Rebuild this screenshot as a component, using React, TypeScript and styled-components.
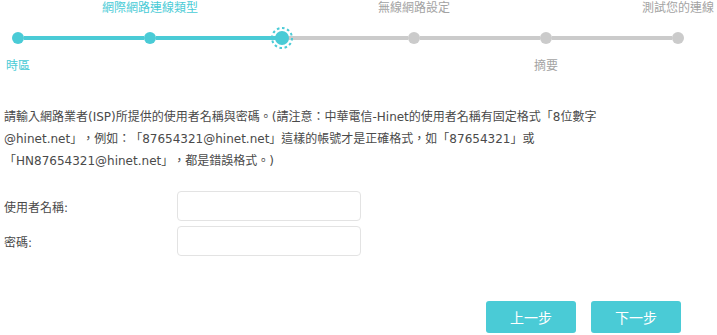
import * as React from 'react'
import styled, { createGlobalStyle } from 'styled-components'

const GlobalStyle = createGlobalStyle`
	html, body {
		margin: 0;
		padding: 0;
		background: #ffffff;
	}
	body {
		font-family: 'DejaVu Sans', 'Noto Sans CJK TC', sans-serif;
		font-size: 12px;
		color: #4a4a4a;
		text-spacing-trim: space-all;
	}
`

const TEAL = '#4acbd6'
const GREY = '#cbcbcb'

const Page = styled.div`
	width: 717px;
	height: 335px;
	overflow: hidden;
	box-sizing: border-box;
`

const Stepper = styled.div`
	display: flex;
	width: 684px;
	padding-left: 12px;
	box-sizing: border-box;
`

const Step = styled.div`
	width: 12px;
	display: flex;
	flex-direction: column;
	align-items: center;
	flex-shrink: 0;
`

const StepLabel = styled.div<{ $on: boolean }>`
	height: 16px;
	line-height: 16px;
	font-size: 12px;
	white-space: nowrap;
	color: ${p => (p.$on ? TEAL : '#a3a3a3')};
`

const DotBox = styled.div`
	position: relative;
	width: 12px;
	height: 22px;
	margin: 11px 0 9px;
	display: flex;
	align-items: center;
	justify-content: center;
`

const Dot = styled.div<{ $on: boolean; $current?: boolean }>`
	width: ${p => (p.$current ? 14 : 12)}px;
	height: ${p => (p.$current ? 14 : 12)}px;
	border-radius: 50%;
	flex-shrink: 0;
	background: ${p => (p.$on ? TEAL : GREY)};
`

const Ring = styled.svg`
	position: absolute;
	left: 50%;
	top: 50%;
	width: 22px;
	height: 22px;
	margin: -11px 0 0 -11px;
`

const Segment = styled.div<{ $on: boolean }>`
	flex: 1;
	height: 4px;
	margin-top: 36px;
	background: ${p => (p.$on ? TEAL : GREY)};
`

const Content = styled.div`
	padding: 32px 0 0 4px;
`

const Notice = styled.p`
	margin: 0;
	width: 640px;
	line-height: 22px;
	font-size: 12px;
	color: #4a4a4a;
`

const Form = styled.div`
	margin-top: 19px;
	display: flex;
	flex-direction: column;
	gap: 5px;
`

const Row = styled.div`
	display: flex;
	align-items: center;
`

const Label = styled.label`
	width: 173px;
	font-size: 12px;
	color: #4a4a4a;
`

const Input = styled.input`
	width: 184px;
	height: 30px;
	box-sizing: border-box;
	border: 1px solid #e3e3e3;
	border-radius: 4px;
	padding: 0 8px;
	font-family: inherit;
	font-size: 12px;
	outline: none;
`

const Actions = styled.div`
	display: flex;
	justify-content: flex-end;
	gap: 15px;
	margin-top: 45px;
	padding-right: 36px;
`

const Button = styled.button`
	width: 90px;
	height: 32px;
	border: none;
	border-radius: 3px;
	background: ${TEAL};
	color: #ffffff;
	font-family: inherit;
	font-size: 14px;
	cursor: pointer;
`

const steps = [
	{ label: '時區', below: true },
	{ label: '網際網路連線類型', below: false },
	{ label: '', below: false },
	{ label: '無線網路設定', below: false },
	{ label: '摘要', below: true },
	{ label: '測試您的連線', below: false },
]
const current = 2

export default function App() {
	return (
		<Page>
			<GlobalStyle />
			<Stepper>
				{steps.map((s, i) => (
					<React.Fragment key={i}>
						{i > 0 && <Segment $on={i <= current} />}
						<Step>
							<StepLabel $on={i <= current}>{s.below ? '' : s.label}</StepLabel>
							<DotBox>
								<Dot $on={i <= current} $current={i === current} />
								{i === current && (
									<Ring viewBox="0 0 22 22">
										<circle
											cx="11"
											cy="11"
											r="10"
											fill="none"
											stroke={TEAL}
											strokeWidth="2"
											strokeDasharray="2.6 2.6"
										/>
									</Ring>
								)}
							</DotBox>
							<StepLabel $on={i <= current}>{s.below ? s.label : ''}</StepLabel>
						</Step>
					</React.Fragment>
				))}
			</Stepper>
			<Content>
				<Notice>
					請輸入網路業者(ISP)所提供的使用者名稱與密碼。(請注意：中華電信-Hinet的使用者名稱有固定格式「8位數字@hinet.net」，例如：「87654321@hinet.net」這樣的帳號才是正確格式，如「87654321」或「HN87654321@hinet.net」，都是錯誤格式。)
				</Notice>
				<Form>
					<Row>
						<Label>使用者名稱:</Label>
						<Input type="text" />
					</Row>
					<Row>
						<Label>密碼:</Label>
						<Input type="password" />
					</Row>
				</Form>
				<Actions>
					<Button>上一步</Button>
					<Button>下一步</Button>
				</Actions>
			</Content>
		</Page>
	)
}
